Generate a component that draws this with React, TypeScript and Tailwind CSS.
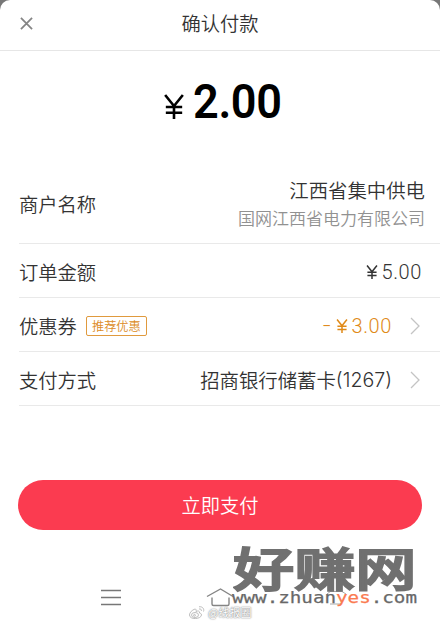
import type { ReactNode } from 'react';

function Chevron() {
  return (
    <svg className="ml-[18px] mr-[20px] h-[18px] w-[10px] shrink-0" viewBox="0 0 10 18" fill="none">
      <path d="M1 1L9 9L1 17" stroke="#c4c4c4" strokeWidth="1.3" />
    </svg>
  );
}

function Yen({ className }: { className: string }) {
  return (
    <svg className={className} viewBox="0 0 20 26" fill="none" stroke="currentColor">
      <path d="M0.8 1L10 12.5L19.2 1M10 12.5V26M1.5 13.5H18.5M1.5 19.5H18.5" />
    </svg>
  );
}

interface RowProps {
  label: string;
  tag?: string;
  className: string;
  children: ReactNode;
}

function Row({ label, tag, className, children }: RowProps) {
  return (
    <div className={`flex items-center justify-between border-b border-[#e9e9e9] ${className}`}>
      <div className="flex items-center">
        <span className="text-[19.3px] leading-6">{label}</span>
        {tag && (
          <span className="ml-[9px] flex h-[20px] w-[61px] items-center justify-center rounded-[2px] border border-[#e09a3e] pt-px text-[12.2px] leading-none text-[#dc8b25]">
            {tag}
          </span>
        )}
      </div>
      {children}
    </div>
  );
}

export default function App() {
  return (
    <div className="h-[623px] w-[440px] overflow-hidden bg-[#777]">
      <div className="relative flex h-full flex-col rounded-t-[10px] bg-white font-['Noto_Sans_CJK_SC',sans-serif] font-[350] text-[#333]">
        <header className="grid h-[51px] shrink-0 grid-cols-[1fr_auto_1fr] items-center border-b border-[#e6e6e6]">
          <svg className="ml-5 mt-[-3px] size-[13px]" viewBox="0 0 14 14" fill="none">
            <path d="M1 1L13 13M13 1L1 13" stroke="#858585" strokeWidth="1.9" />
          </svg>
          <h1 className="pb-[4px] text-[19.3px] leading-6">确认付款</h1>
        </header>

        <div className="flex h-[113px] shrink-0 items-start justify-center pt-[32px] pl-[13px] text-black">
          <Yen className="mr-[9px] mt-[11px] h-[25px] w-[20px] stroke-[2.7]" />
          <span className="origin-left scale-x-[0.92] font-[Roboto,sans-serif] text-[49px] leading-[38px] font-semibold tracking-[-0.4px]">2.00</span>
        </div>

        <main className="shrink-0 pl-[19px]">
          <Row label="商户名称" className="h-[80px]">
            <div className="mr-[15px] flex flex-col items-end pb-[1px]">
              <span className="text-[19.4px] leading-[28px]">江西省集中供电</span>
              <span className="text-[17px] leading-[27px] text-[#919191]">国网江西省电力有限公司</span>
            </div>
          </Row>
          <Row label="订单金额" className="h-[54px] pt-[2px]">
            <div className="mr-[18px] flex items-center">
              <Yen className="mr-[4px] h-[14px] w-[12px] stroke-[2.8]" />
              <span className="font-[Roboto,sans-serif] text-[20px] leading-6 font-[350] tracking-[0.6px]">5.00</span>
            </div>
          </Row>
          <Row label="优惠券" tag="推荐优惠" className="h-[54px] pt-[2px]">
            <div className="flex items-center text-[#e08a18]">
              <span className="mr-[5px] mt-[-2px] inline-block origin-right scale-x-[1.4] font-[Roboto,sans-serif] text-[20px] leading-6">-</span>
              <Yen className="mr-[4px] h-[14px] w-[12px] stroke-[2.8]" />
              <span className="font-[Roboto,sans-serif] text-[20px] leading-6 font-[350] tracking-[0.6px]">3.00</span>
              <Chevron />
            </div>
          </Row>
          <Row label="支付方式" className="h-[54px] pt-[2px]">
            <div className="flex items-center">
              <span className="text-[19.4px] leading-6">招商银行储蓄卡</span>
              <span className="font-[Inter,sans-serif] text-[19.6px] leading-6 font-light">(1267)</span>
              <Chevron />
            </div>
          </Row>
        </main>

        <button className="mx-[18px] mt-[74px] h-[50px] shrink-0 rounded-full bg-[#fb3b50] text-[19.3px] text-white">
          立即支付
        </button>

        {/* system navigation */}
        <nav className="mt-[56px] flex h-[22px] shrink-0 items-start">
          <svg className="ml-[101px] mt-[3px] h-[17px] w-[20px]" viewBox="0 0 20 17" stroke="#777" strokeWidth="1.4">
            <path d="M0 1.5H20M0 8.5H20M0 15.5H20" />
          </svg>
          <svg className="ml-[85px] mt-[2px] h-[19px] w-[28px]" viewBox="0 0 28 19" fill="none" stroke="#858585" strokeWidth="1.4">
            <path d="M1 8.5L14.5 1L27 8.5M6 9.5V16Q6 17.5 7.5 17.5H21.5Q23 17.5 23 16V9.5" />
          </svg>
          <svg className="ml-[92px] mt-[4px] h-[15px] w-[22px]" viewBox="0 0 22 15" fill="none" stroke="#aaa" strokeWidth="1">
            <path d="M5 1L1 4M4 1.5H16L20 4M4 14H15" />
          </svg>
        </nav>

        {/* watermarks */}
        <div className="absolute left-[189px] top-[604px] flex items-center text-white [text-shadow:0_0_1px_#777,0_0_2px_#999]">
          <svg className="h-[13px] w-[16px]" viewBox="0 0 16 13" fill="white" stroke="#b5b5b5" strokeWidth="0.9">
            <path d="M6 3C3 4 0.5 6.5 0.5 9C0.5 14 12 13.5 12.5 9C12.5 7.5 11 7 10.5 7C11 5 9 4.5 7 5.5C7.5 4 7 3 6 3Z" />
            <ellipse cx="6" cy="9" rx="3.5" ry="2.5" />
            <circle cx="5.5" cy="9.3" r="0.9" />
            <path d="M10 0.8C13.5 0.2 15.5 3 14.5 5.5M10 3C12 2.7 12.8 3.8 12.3 5" />
          </svg>
          <span className="ml-[3px] text-[11px] leading-[16px] font-normal">@线报圈</span>
        </div>
        <div className="absolute left-[233px] top-[540px] text-[#707070]">
          <div className="w-[138px] origin-left scale-x-[1.33] whitespace-nowrap text-[46px] leading-[52px] font-medium [-webkit-text-stroke:2px_#707070] [stroke-linejoin:round]">好赚网</div>
        </div>
        <div className="absolute left-[232px] top-[587px] text-[#686868]">
          <div className="origin-left scale-x-[1.2] whitespace-nowrap font-['DejaVu_Sans_Mono',monospace] text-[16px] leading-[22px] [-webkit-text-stroke:0.25px_currentColor]">
            www.zhuan<span className="text-[#fa7a50]">yes</span>.com
          </div>
        </div>
      </div>
    </div>
  );
}
